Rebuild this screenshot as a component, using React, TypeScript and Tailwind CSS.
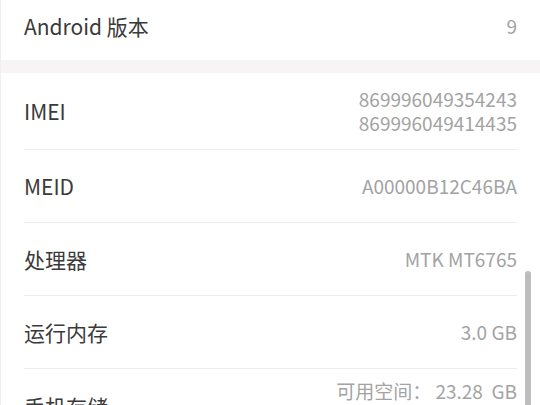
const font = { fontFamily: '"Noto Sans CJK SC", "Noto Sans", sans-serif' };

interface RowProps {
  label: string;
  values: string[];
  tall?: boolean;
}

function InfoRow({ label, values, tall }: RowProps) {
  return (
    <div className="px-[23px]">
      <div
        className={`flex items-center justify-between border-b border-[#ececec] ${
          tall ? 'h-[77px]' : 'h-[73px]'
        }`}
      >
        <span className="text-[21px] text-[#3a3a3a] leading-[28px]">{label}</span>
        <div className="flex flex-col items-end text-[19px] text-[#a3a3a3] leading-[24px]">
          {values.map((v) => (
            <span key={v}>{v}</span>
          ))}
        </div>
      </div>
    </div>
  );
}

export default function App() {
  return (
    <div
      className="relative w-[540px] h-[405px] overflow-hidden bg-white border-l border-[#efefef]"
      style={font}
    >
      {/* Android version (top, scrolled) */}
      <div className="h-[60px] px-[23px] pb-[8px] flex items-center justify-between">
        <span className="text-[21px] text-[#3a3a3a] leading-[28px]">Android 版本</span>
        <span className="text-[19px] text-[#a3a3a3]">9</span>
      </div>

      {/* Section gap */}
      <div className="h-[13px] bg-[#f7f4f6]" />

      <InfoRow label="IMEI" values={['869996049354243', '869996049414435']} tall />
      <InfoRow label="MEID" values={['A00000B12C46BA']} />
      <InfoRow label="处理器" values={['MTK MT6765']} />
      <InfoRow label="运行内存" values={['3.0 GB']} />

      {/* Storage */}
      <div className="px-[23px] flex justify-between items-start">
        <span className="mt-[23px] text-[21px] text-[#3a3a3a] leading-[28px]">手机存储</span>
        <div className="mt-[10px] flex flex-col items-end text-[19px] text-[#a3a3a3] leading-[24px] whitespace-pre">
          <span>可用空间： 23.28  GB</span>
          <span>总空间： 32.00  GB</span>
        </div>
      </div>

      {/* Scrollbar */}
      <div className="absolute right-[9px] top-[271px] w-[6px] h-[150px] rounded-full bg-[#bdbdbd]" />
    </div>
  );
}
